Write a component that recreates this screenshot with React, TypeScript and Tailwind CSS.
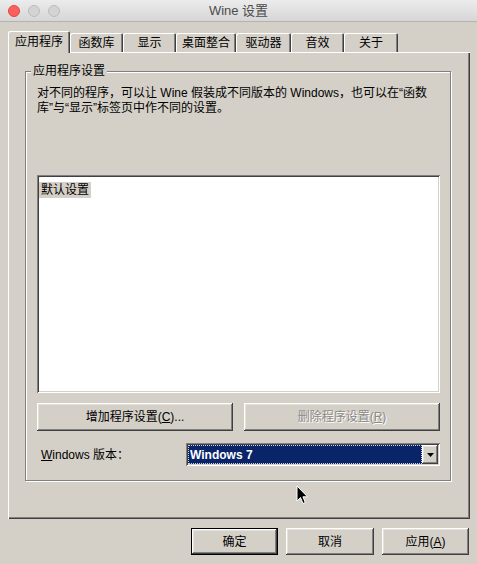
import { ReactNode } from "react";

const raised =
  "shadow-[inset_-1px_-1px_0_#404040,inset_1px_1px_0_#ffffff,inset_-2px_-2px_0_#808080,inset_2px_2px_0_#e4e1db]";
const sunken =
  "shadow-[inset_1px_1px_0_#808080,inset_-1px_-1px_0_#ffffff,inset_2px_2px_0_#404040,inset_-2px_-2px_0_#d4d0c8]";

const TABS = [
  { label: "应用程序", w: "w-[62px]" },
  { label: "函数库", w: "w-[53px]" },
  { label: "显示", w: "w-[53px]" },
  { label: "桌面整合", w: "w-[60px]" },
  { label: "驱动器", w: "w-[55px]" },
  { label: "音效", w: "w-[53px]" },
  { label: "关于", w: "w-[54px]" },
];

const Button = ({
  children,
  className = "",
  disabled = false,
  isDefault = false,
}: {
  children: ReactNode;
  className?: string;
  disabled?: boolean;
  isDefault?: boolean;
}) => (
  <div
    className={`flex items-center justify-center bg-[#d4d0c8] text-[12px] ${
      disabled ? "text-[#8c8a86] [text-shadow:1px_1px_0_#ffffff]" : "text-black"
    } ${isDefault ? "border border-black" : ""} ${className}`}
  >
    <div className={`flex h-full w-full items-center justify-center ${raised}`}>
      {children}
    </div>
  </div>
);

const Cursor = () => (
  <svg
    className="absolute left-[296px] top-[485px]"
    width="13"
    height="20"
    viewBox="0 0 13 20"
  >
    <path
      d="M1 1 L1 16 L4.5 12.5 L7 18.5 L9.3 17.5 L6.9 11.8 L11.5 11.8 Z"
      fill="#000"
      stroke="#fff"
      strokeWidth="1"
      strokeLinejoin="round"
    />
  </svg>
);

export default function App() {
  return (
    <div className="relative flex h-[564px] w-[477px] flex-col overflow-hidden bg-[#d4d0c8] font-['Liberation_Sans','Noto_Sans_CJK_SC',sans-serif] text-black">
      {/* title bar */}
      <div className="relative flex h-[22px] items-center border-b border-[#b3b3b3] bg-gradient-to-b from-[#ececec] to-[#d6d6d6]">
        <div className="flex items-center gap-[8px] pl-[8px]">
          <span className="h-[12px] w-[12px] rounded-full border border-[#df4744] bg-[#fc605c]" />
          <span className="h-[12px] w-[12px] rounded-full border border-[#bdbdbd] bg-[#d3d3d3]" />
          <span className="h-[12px] w-[12px] rounded-full border border-[#bdbdbd] bg-[#d3d3d3]" />
        </div>
        <div className="absolute inset-0 flex items-center justify-center text-[13px] text-[#4c4c4c]">
          Wine 设置
        </div>
      </div>

      <div className="pl-[8px] pt-[9px]">
        {/* tabs */}
        <div className="flex items-end">
          {TABS.map((t, i) => (
            <div
              key={t.label}
              className={`${t.w} flex items-center justify-center bg-[#d4d0c8] text-[12px] rounded-t-[2px] shadow-[inset_1px_1px_0_#ffffff,inset_-1px_0_0_#404040,inset_-2px_0_0_#808080] ${
                i === 0 ? "relative z-10 -mb-[1px] h-[22px]" : "h-[19px]"
              }`}
            >
              {t.label}
            </div>
          ))}
        </div>

        {/* tab panel */}
        <div className="h-[467px] w-[462px] pl-[17px] pt-[19px] shadow-[inset_1px_1px_0_#ffffff,inset_-1px_-1px_0_#404040,inset_-2px_-2px_0_#808080]">
          <div className="relative h-[410px] w-[426px] border border-[#808080] pl-[11px] pr-[10px] pt-[14px] shadow-[inset_1px_1px_0_#ffffff,1px_1px_0_#ffffff]">
            <span className="absolute -top-[8px] left-[5px] bg-[#d4d0c8] px-[2px] text-[12px] leading-[15px]">
              应用程序设置
            </span>
            <p className="text-[12px] leading-[15px]">
              对不同的程序，可以让 Wine 假装成不同版本的 Windows，也可以在“函数库”与“显示”标签页中作不同的设置。
            </p>

            <div className={`mt-[59px] h-[218px] bg-white p-[2px] ${sunken}`}>
              <div className="inline-block bg-[#d4d0c8] px-[2px] text-[12px] leading-[16px]">
                默认设置
              </div>
            </div>

            <div className="mt-[10px] flex gap-[11px]">
              <Button className="h-[28px] w-[196px]">
                增加程序设置(<span className="underline">C</span>)...
              </Button>
              <Button className="h-[28px] w-[196px]" disabled>
                删除程序设置(<span className="underline">R</span>)
              </Button>
            </div>

            <div className="mt-[12px] flex h-[23px] items-center">
              <span className="pl-[4px] text-[12px]">
                <span className="underline">W</span>indows 版本：
              </span>
              <div className={`ml-auto flex h-[23px] w-[254px] bg-white p-[2px] ${sunken}`}>
                <div className="flex flex-1 items-center border border-dotted border-[#d0d0d0] bg-[#0a246a] pl-[1px] text-[12px] font-bold text-white">
                  Windows 7
                </div>
                <div className={`flex w-[16px] items-center justify-center bg-[#d4d0c8] ${raised}`}>
                  <svg width="7" height="4" viewBox="0 0 7 4">
                    <path d="M0 0 H7 L3.5 4 Z" fill="#000" />
                  </svg>
                </div>
              </div>
            </div>
          </div>
        </div>

        {/* bottom buttons */}
        <div className="mt-[9px] flex justify-end gap-[8px] pr-[8px]">
          <Button className="h-[27px] w-[87px]" isDefault>
            确定
          </Button>
          <Button className="h-[27px] w-[88px]">取消</Button>
          <Button className="h-[27px] w-[87px]">
            应用(<span className="underline">A</span>)
          </Button>
        </div>
      </div>

      <Cursor />
    </div>
  );
}
